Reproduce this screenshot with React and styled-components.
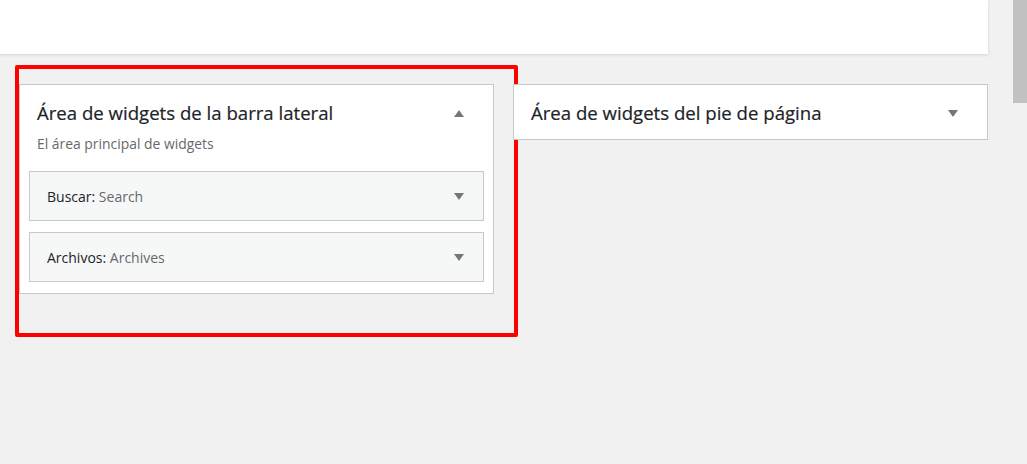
import React from 'react';
import styled, { createGlobalStyle } from 'styled-components';

const GlobalStyle = createGlobalStyle`
  html, body {
    margin: 0;
    padding: 0;
    background: #f1f1f1;
    font-family: "Open Sans", "Noto Sans", sans-serif;
    overflow: hidden;
  }
`;

const Page = styled.div`
  display: flex;
  height: 464px;
  width: 1027px;
`;

const Main = styled.div`
  flex: 1;
  display: flex;
  flex-direction: column;
  background: #f1f1f1;
`;

const TopPanel = styled.div`
  height: 54px;
  margin-right: 25px;
  background: #fff;
  box-shadow: 0 1px 3px rgba(0, 0, 0, 0.13);
`;

const Columns = styled.div`
  display: flex;
  align-items: flex-start;
  gap: 19px;
  padding: 30px 25px 0 19px;
`;

const Column = styled.div`
  position: relative;
  width: 475px;
`;

const Highlight = styled.div`
  position: absolute;
  top: -19px;
  left: -4px;
  right: -24px;
  bottom: -43px;
  border: 4px solid #ff0000;
  border-radius: 2px;
  pointer-events: none;
`;

const SidebarPanel = styled.div`
  box-sizing: border-box;
  width: 475px;
  background: #fff;
  border: 1px solid #c8c8c8;
  padding-bottom: ${props => (props.open ? '11px' : '0')};
`;

const SidebarHeader = styled.div`
  display: flex;
  align-items: center;
  justify-content: space-between;
  padding: 16px 29px ${props => (props.open ? '0' : '14px')} 17px;
`;

const SidebarTitle = styled.h2`
  margin: 0;
  font-size: 18.6px;
  line-height: 24px;
  font-weight: 400;
  color: #1d2327;
  -webkit-text-stroke: 0.2px #1d2327;
`;

const Description = styled.p`
  margin: 9px 17px 0;
  font-size: 13.9px;
  line-height: 20px;
  color: #646970;
`;

const WidgetList = styled.div`
  display: flex;
  flex-direction: column;
  gap: 11px;
  margin: 17px 9px 0;
`;

const Widget = styled.div`
  box-sizing: border-box;
  height: 50px;
  display: flex;
  align-items: center;
  justify-content: space-between;
  padding: 1px 19px 0 17px;
  background: #f6f7f7;
  border: 1px solid #c8c8c8;
`;

const WidgetTitle = styled.h3`
  margin: 0;
  font-size: 14px;
  line-height: 20px;
  font-weight: 400;
  color: #1d2327;
`;

const WidgetName = styled.span`
  color: #646970;
`;

const Scrollbar = styled.div`
  width: 14px;
  background: #f1f1f1;
`;

const ScrollThumb = styled.div`
  height: 103px;
  background: #c1c1c1;
`;

const Caret = ({ up }) => (
  <svg width="10" height="7" viewBox="0 0 10 7" style={{ display: 'block' }}>
    {up
      ? <polygon points="0,7 10,7 5,0" fill="#72777c" />
      : <polygon points="0,0 10,0 5,7" fill="#72777c" />}
  </svg>
);

const widgets = [
  { label: 'Buscar', name: 'Search' },
  { label: 'Archivos', name: 'Archives' },
];

export default function App() {
  return (
    <Page>
      <GlobalStyle />
      <Main>
        <TopPanel />
        <Columns>
          <Column>
            <SidebarPanel open>
              <SidebarHeader open>
                <SidebarTitle>Área de widgets de la barra lateral</SidebarTitle>
                <Caret up />
              </SidebarHeader>
              <Description>El área principal de widgets</Description>
              <WidgetList>
                {widgets.map(w => (
                  <Widget key={w.label}>
                    <WidgetTitle>
                      {w.label}: <WidgetName>{w.name}</WidgetName>
                    </WidgetTitle>
                    <Caret />
                  </Widget>
                ))}
              </WidgetList>
            </SidebarPanel>
            <Highlight />
          </Column>
          <Column>
            <SidebarPanel>
              <SidebarHeader>
                <SidebarTitle>Área de widgets del pie de página</SidebarTitle>
                <Caret />
              </SidebarHeader>
            </SidebarPanel>
          </Column>
        </Columns>
      </Main>
      <Scrollbar>
        <ScrollThumb />
      </Scrollbar>
    </Page>
  );
}
